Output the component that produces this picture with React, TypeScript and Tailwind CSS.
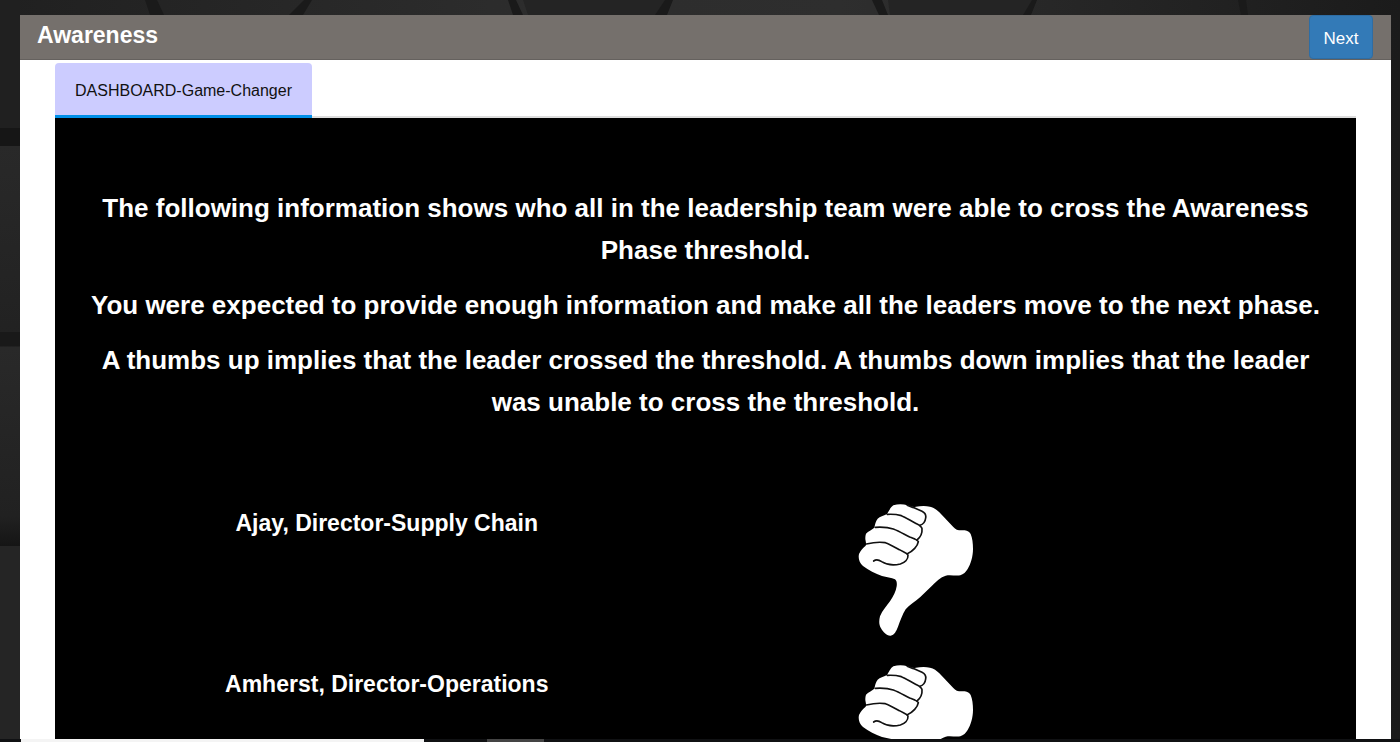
type Leader = { name: string; role: string };

const leaders: Leader[] = [
  { name: "Ajay", role: "Director-Supply Chain" },
  { name: "Amherst", role: "Director-Operations" },
];

const messages = [
  "The following information shows who all in the leadership team were able to cross the Awareness Phase threshold.",
  "You were expected to provide enough information and make all the leaders move to the next phase.",
  "A thumbs up implies that the leader crossed the threshold. A thumbs down implies that the leader was unable to cross the threshold.",
];

function StoneBackdrop() {
  return (
    <svg
      aria-hidden="true"
      className="absolute inset-0 h-full w-full"
      viewBox="0 0 1400 742"
      preserveAspectRatio="none"
    >
      <defs>
        <linearGradient id="wall" x1="0" x2="1" y1="0" y2="0">
          <stop offset="0" stopColor="#202020" />
          <stop offset="0.35" stopColor="#2c2c2c" />
          <stop offset="0.6" stopColor="#2e2e2e" />
          <stop offset="0.75" stopColor="#272727" />
          <stop offset="1" stopColor="#1b1b1b" />
        </linearGradient>
        <linearGradient id="stone" x1="0" x2="0" y1="0" y2="1">
          <stop offset="0" stopColor="#292929" />
          <stop offset="0.85" stopColor="#212121" />
          <stop offset="1" stopColor="#151515" />
        </linearGradient>
      </defs>
      <rect width="1400" height="742" fill="url(#wall)" />
      <path d="M145 0h12l7 15h-14zM304 0h8l-9 15h-14zM508 0h8l7 15h-10zM664 0h9l-6 15h-14zM872 0h10l6 15h-9zM1030 0h7l-6 15h-11zM1238 0h8l2 15h-7z" fill="#1a1a1a" />
      <path d="M523 0h142l-10 15H528zM888 0h144l-9 15H890z" fill="#242424" />
      <rect width="20" height="145" fill="#202020" />
      <rect y="128" width="20" height="18" fill="#161616" />
      <rect y="146" width="20" height="241" fill="url(#stone)" />
      <rect y="347" width="20" height="199" fill="url(#stone)" />
      <rect y="332" width="20" height="14" fill="#191919" />
      <rect y="546" width="20" height="196" fill="#252525" />
    </svg>
  );
}

function ThumbsDown() {
  return (
    <svg
      role="img"
      aria-label="Thumbs down"
      viewBox="0 0 450 465"
      className="mx-auto block h-[155px] w-[150px]"
    >
      <path
        fill="#fff"
        d="M160 46C175 41 190 42 202 46C211 50 220 52 228 50C241 48 256 47 270 50C281 52 290 59 298 67L335 106C342 113 347 120 357 121L374 121C383 122 388 126 392 132C397 144 399 160 399 176C399 200 392 222 383 237C378 246 370 253 361 256C347 258 330 254 317 257C302 261 288 275 276 287L241 321C226 334 207 346 197 358C187 374 181 392 174 410C169 423 163 435 152 437C140 438 130 427 123 415C116 403 117 391 120 379C127 362 141 347 150 334C160 319 168 304 170 289C171 280 171 273 165 268C155 263 139 261 126 258C106 251 86 241 69 228C58 219 54 205 57 192C61 182 69 174 77 167C79 162 78 158 77 153C75 145 76 137 78 131C85 124 95 119 103 113C105 104 107 93 113 86C120 80 130 77 141 72C147 62 152 51 160 46Z"
      />
      <g fill="none" stroke="#111" strokeWidth="5" strokeLinecap="round" strokeLinejoin="round">
        <path d="M202 46C211 51 219 52 224 54L246 64C254 68 259 74 257 84C256 93 249 103 240 106" />
        <path d="M142 73C157 72 170 73 184 77C197 82 210 91 224 98C233 103 244 106 246 116C247 128 241 142 231 150" />
        <path d="M106 112C123 111 145 112 160 117C176 123 193 133 209 141C219 145 231 148 235 155C233 168 219 184 202 191" />
        <path d="M79 162C96 158 118 155 136 158C151 163 165 172 178 179C187 185 200 187 204 195C205 208 194 218 181 222C161 227 141 225 125 215C116 209 108 208 101 213" />
      </g>
    </svg>
  );
}

export default function App() {
  return (
    <div className="relative flex h-screen flex-col overflow-hidden bg-[#202020] font-['Liberation_Sans',Arial,sans-serif]">
      <StoneBackdrop />

      <div className="relative mt-[15px] mr-[9px] ml-5 flex min-h-0 flex-1 flex-col overflow-hidden bg-white">
        <header className="flex h-[45px] shrink-0 items-start justify-between border-b border-[#65615e] bg-[#75706c] pr-[18px] pl-[17px]">
          <h1 className="pt-1 text-[23px] leading-8 font-bold text-white">Awareness</h1>
          <button
            type="button"
            className="h-11 w-16 rounded-[4px] border border-[#2e6da4] bg-[#337ab7] pt-1 text-[17px] text-white"
          >
            Next
          </button>
        </header>

        <main className="flex min-h-0 flex-1 flex-col pt-[3px] pr-[35px] pl-[35px]">
          <div role="tablist" className="flex shrink-0 border-b-2 border-[#dddddd]">
            <button
              type="button"
              role="tab"
              id="dashboard-tab"
              aria-selected="true"
              aria-controls="dashboard-panel"
              className="-mb-[2px] h-[55px] rounded-t-[4px] border-b-[3px] border-[#0090e8] bg-[#ccccff] px-5 pt-[3px] text-[16px] text-[#111111]"
            >
              DASHBOARD-Game-Changer
            </button>
          </div>

          <section
            role="tabpanel"
            id="dashboard-panel"
            aria-labelledby="dashboard-tab"
            className="min-h-0 flex-1 overflow-hidden bg-black text-white"
          >
            <div className="space-y-[13px] px-8 pt-[69px] text-center text-[26px] leading-[42px] font-bold">
              {messages.map((message) => (
                <p key={message}>{message}</p>
              ))}
            </div>

            <table className="mt-[67px] ml-[5.2%] w-[81.2%] table-fixed">
              <tbody>
                {leaders.map((leader) => (
                  <tr key={leader.name} className="h-[161px] align-top">
                    <th scope="row" className="w-1/2 pt-[17px] text-[23px] leading-8 font-bold">
                      {leader.name}, {leader.role}
                    </th>
                    <td className="w-1/2">
                      <ThumbsDown />
                    </td>
                  </tr>
                ))}
              </tbody>
            </table>
          </section>
        </main>
      </div>

      <footer aria-hidden="true" className="relative flex h-[3px] shrink-0 bg-[#101113] pl-[21px]">
        <span className="w-[403px] bg-[#f4f4f4]" />
        <span className="ml-[63px] w-[57px] bg-[#444444]" />
      </footer>
    </div>
  );
}
